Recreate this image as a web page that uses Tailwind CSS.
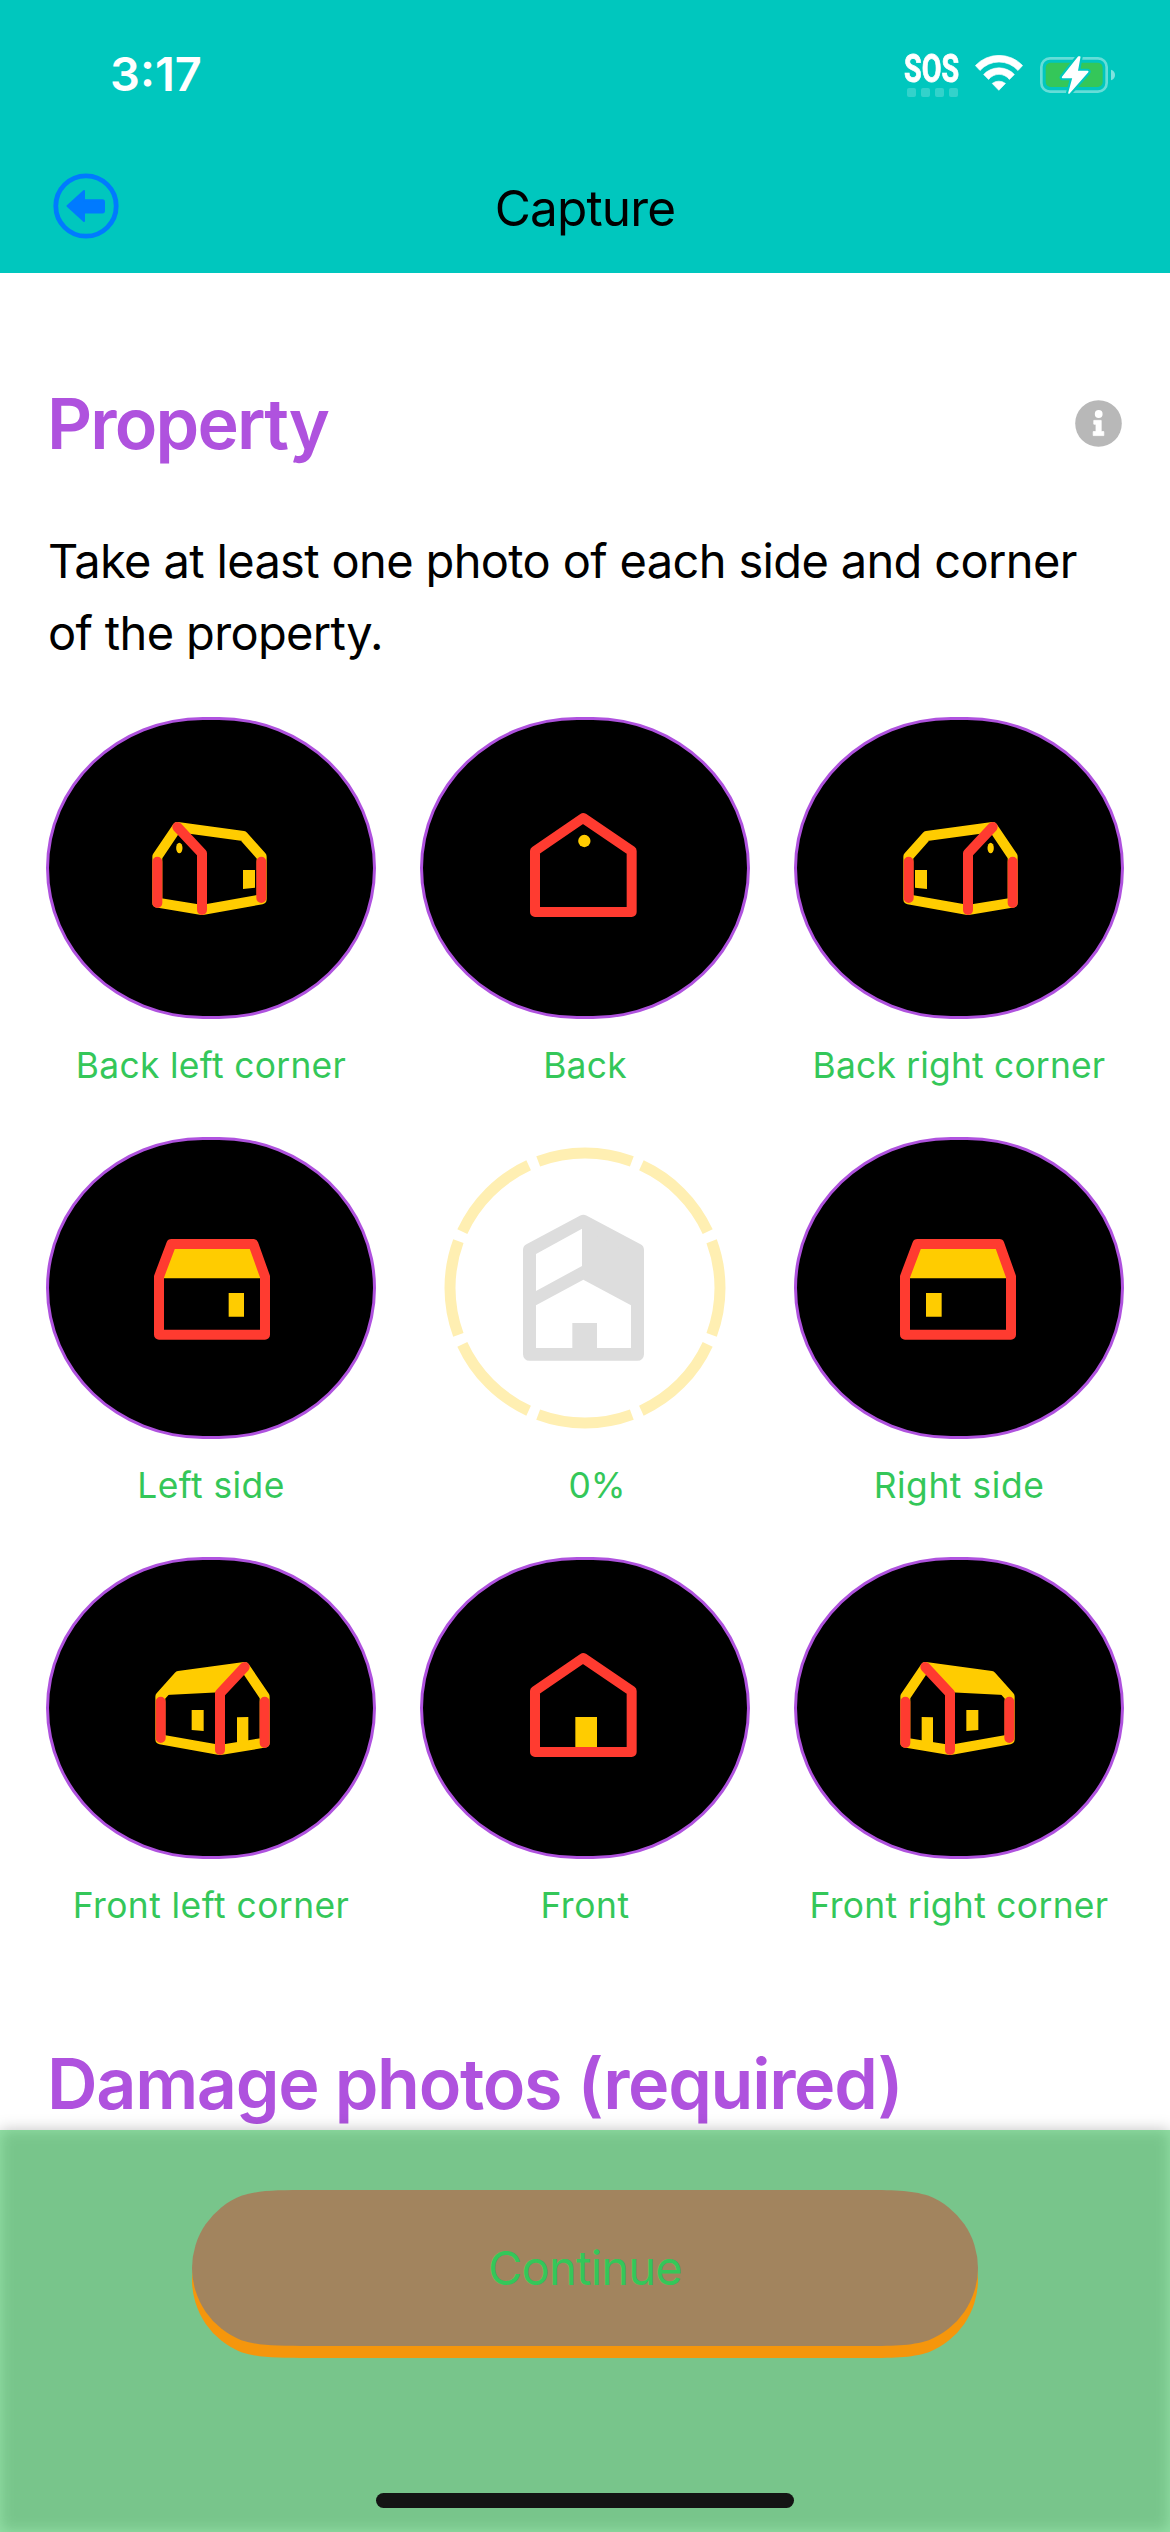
<!DOCTYPE html>
<html lang="en">
<head>
<meta charset="utf-8">
<title>Capture</title>
<script src="https://cdn.jsdelivr.net/npm/@tailwindcss/browser@4"></script>
</head>
<body class="bg-white">
<div class="relative flex h-[2532px] w-[1170px] flex-col overflow-hidden bg-white font-['Inter',sans-serif] text-black">

  <header class="h-[273px] shrink-0 bg-[#00c7be]">
    <!-- Status bar -->
    <div class="flex h-[173px] items-start justify-between pl-[110px] pr-[55px] pt-[50px] text-white">
      <span class="text-[47px] leading-[48px] font-semibold">3:17</span>
      <div class="flex items-start">
        <div class="mt-px mr-[15px] w-[56px]">
          <div class="w-[73px] origin-left scale-x-[0.754] font-['Roboto',sans-serif] text-[38px] leading-[37px] font-bold [-webkit-text-stroke:0.8px_white]">SOS</div>
          <div class="flex gap-[5px] pl-[3px]">
            <i class="size-[9px] rounded-[2px] bg-white/20"></i><i class="size-[9px] rounded-[2px] bg-white/20"></i><i class="size-[9px] rounded-[2px] bg-white/20"></i><i class="size-[9px] rounded-[2px] bg-white/20"></i>
          </div>
        </div>
        <svg class="mt-[5px] mr-[17px] h-[36px] w-[48px]" viewBox="345 75 145 109" fill="#fff" stroke="#fff" stroke-width="2" stroke-linejoin="round">
          <path d="M346 107A98 98 0 0 1 489 107L475 122A77 77 0 0 0 360 122Z"/>
          <path d="M371 134A64 64 0 0 1 464 134L449 149A40 40 0 0 0 386 149Z"/>
          <path d="M397 161A33 33 0 0 1 437 161L417 182Z"/>
        </svg>
        <svg class="mt-[6px] h-[38px] w-[75px]" viewBox="540 75 225 114">
          <rect x="544" y="82" width="196" height="100" rx="26" fill="none" stroke="#fff" stroke-opacity=".4" stroke-width="8"/>
          <path d="M753 116Q765 120 765 132T753 148Z" fill="#fff" fill-opacity=".5"/>
          <rect x="557" y="95" width="171" height="73" rx="15" fill="#34c759"/>
          <path d="M656 78L608 139H640L627 186L683 122H651L659 78Z" fill="#fff" stroke="#00c7be" stroke-width="18" stroke-linejoin="round"/>
          <path d="M656 78L608 139H640L627 186L683 122H651L659 78Z" fill="#fff" stroke="#fff" stroke-width="5" stroke-linejoin="round"/>
        </svg>
      </div>
    </div>
    <!-- Navigation bar -->
    <div class="grid grid-cols-[66px_1fr_66px] items-start px-[53px]">
      <svg class="size-[66px]" viewBox="0 0 66 66">
        <circle cx="33" cy="33" r="30.2" fill="none" stroke="#007aff" stroke-width="4.8"/>
        <path d="M14.5 33L31 18V27.2H49.5Q51 27.2 51 29V37.8Q51 39.5 49.5 39.5H31V48Z" fill="#007aff" stroke="#007aff" stroke-width="2" stroke-linejoin="round"/>
      </svg>
      <h1 class="text-center text-[49.5px] leading-[70px] tracking-[-0.82px]">Capture</h1>
    </div>
  </header>

  <main class="flex flex-col">
    <div class="mt-[109px] flex items-center justify-between pl-[47px] pr-[48px]">
      <h2 class="text-[70px] leading-[84px] font-semibold tracking-[-1.8px] text-[#af52de]">Property</h2>
      <svg class="mb-[2px] size-[47px]" viewBox="0 0 47 47">
        <circle cx="23.5" cy="23.5" r="23.3" fill="#b8b8b8"/>
        <circle cx="23.7" cy="14" r="3.9" fill="#fff"/>
        <path d="M18.800 20.400H26.200V31.600H28.800V35.600H18.200V31.600H21V24.200H18.800Z" fill="#fff" stroke="#fff" stroke-width=".8" stroke-linejoin="round"/>
      </svg>
    </div>
    <p class="mt-[59px] pl-[48px] text-[47px] leading-[72px] tracking-[-0.65px]">Take at least one photo of each side and corner<br>of the property.</p>

    <div class="mt-[48px] grid grid-cols-[repeat(3,330px)] gap-x-[44px] gap-y-[47px] px-[46px] text-center text-[35.4px] leading-[48px] text-[#34c759]">

      <div class="flex flex-col gap-[23px]">
        <div class="h-[302px] overflow-hidden rounded-[157px/151px] border-3 border-[#af52de] bg-black">
          <svg class="size-full" viewBox="57 60 972 888" stroke-width="30" stroke-linejoin="round" stroke-linecap="round" fill="none">
            <path d="M382 470L442 381L640 408L695 470V598L516 630L382 608Z" stroke="#fc0"/>
            <ellipse cx="448" cy="444" rx="9.5" ry="16" fill="#fc0"/>
            <path d="M639 510H675V563L639 567Z" fill="#fc0"/>
            <path d="M382 485V609M442 381L516 460V630M694 485V594" stroke="#ff3b30"/>
          </svg>
        </div>
        <span class="tracking-[0.31px]">Back left corner</span>
      </div>

      <div class="flex flex-col gap-[23px]">
        <div class="h-[302px] overflow-hidden rounded-[157px/151px] border-3 border-[#af52de] bg-black">
          <svg class="size-full" viewBox="39 60 972 888" fill="none">
            <path d="M375 453L519.5 354L665 453V636H375Z" stroke="#ff3b30" stroke-width="30" stroke-linejoin="round"/>
            <circle cx="523" cy="423" r="18.5" fill="#fc0"/>
          </svg>
        </div>
        <span class="tracking-[0.25px]">Back</span>
      </div>

      <div class="flex flex-col gap-[23px]">
        <div class="h-[302px] overflow-hidden rounded-[157px/151px] border-3 border-[#af52de] bg-black">
          <svg class="size-full" viewBox="51 60 972 888" stroke-width="30" stroke-linejoin="round" stroke-linecap="round" fill="none">
            <g transform="translate(1080) scale(-1 1)">
              <path d="M382 470L442 381L640 408L695 470V598L516 630L382 608Z" stroke="#fc0"/>
              <ellipse cx="448" cy="444" rx="9.5" ry="16" fill="#fc0"/>
              <path d="M639 510H675V563L639 567Z" fill="#fc0"/>
              <path d="M382 485V609M442 381L516 460V630M694 485V594" stroke="#ff3b30"/>
            </g>
          </svg>
        </div>
        <span class="tracking-[0.2px]">Back right corner</span>
      </div>

      <div class="flex flex-col gap-[23px]">
        <div class="h-[302px] overflow-hidden rounded-[157px/151px] border-3 border-[#af52de] bg-black">
          <svg class="size-full" viewBox="57 60 972 888" fill="none">
            <path d="M424 372H670L705 475H387Z" fill="#fc0"/>
            <path d="M596 519H642V590H596Z" fill="#fc0"/>
            <path d="M387 470L424 372H670L705 470V644H387Z" stroke="#ff3b30" stroke-width="30" stroke-linejoin="round"/>
          </svg>
        </div>
        <span class="tracking-[0.44px]">Left side</span>
      </div>

      <div class="flex flex-col gap-[23px]">
        <svg class="h-[302px] w-full" viewBox="30 51 990 906" fill="none">
          <circle cx="525" cy="504" r="405" stroke="#ffefb2" stroke-width="33" pathLength="360" stroke-dasharray="40.6 4.4" stroke-dashoffset="20.3"/>
          <path d="M358.5 390L520 304L682.5 390V703H358.5Z" fill="#ddd" stroke="#ddd" stroke-width="39" stroke-linejoin="round"/>
          <path d="M378 402L516 326V438L378 513ZM378 556L520 479L663 556V684H561V609H487V684H378Z" fill="#fff"/>
        </svg>
        <span class="pl-6">0%</span>
      </div>

      <div class="flex flex-col gap-[23px]">
        <div class="h-[302px] overflow-hidden rounded-[157px/151px] border-3 border-[#af52de] bg-black">
          <svg class="size-full" viewBox="51 60 972 888" fill="none">
            <path d="M412 372H658L693 475H375Z" fill="#fc0"/>
            <path d="M438 519H485V590H438Z" fill="#fc0"/>
            <path d="M375 470L412 372H658L693 470V644H375Z" stroke="#ff3b30" stroke-width="30" stroke-linejoin="round"/>
          </svg>
        </div>
        <span class="tracking-[0.56px]">Right side</span>
      </div>

      <div class="flex flex-col gap-[23px]">
        <div class="h-[302px] overflow-hidden rounded-[157px/151px] border-3 border-[#af52de] bg-black">
          <svg class="size-full" viewBox="57 60 972 888" stroke-width="30" stroke-linejoin="round" stroke-linecap="round" fill="none">
            <g transform="translate(1080) scale(-1 1)">
              <path d="M376 470L436 381L634 408L689 470V598L510 630L376 608Z" stroke="#fc0"/>
              <path d="M436 381L634 408L672 465L510 457Z" fill="#fc0"/>
              <path d="M425 531L459 532V612L425 608ZM559 510H595V570L559 573Z" fill="#fc0"/>
              <path d="M376 485V609M436 381L510 460V630M688 485V594" stroke="#ff3b30"/>
            </g>
          </svg>
        </div>
        <span class="tracking-[0.45px]">Front left corner</span>
      </div>

      <div class="flex flex-col gap-[23px]">
        <div class="h-[302px] overflow-hidden rounded-[157px/151px] border-3 border-[#af52de] bg-black">
          <svg class="size-full" viewBox="39 60 972 888" fill="none">
            <path d="M496 531H561V625H496Z" fill="#fc0"/>
            <path d="M375 453L519.5 354L665 453V636H375Z" stroke="#ff3b30" stroke-width="30" stroke-linejoin="round"/>
          </svg>
        </div>
        <span class="tracking-[0.57px]">Front</span>
      </div>

      <div class="flex flex-col gap-[23px]">
        <div class="h-[302px] overflow-hidden rounded-[157px/151px] border-3 border-[#af52de] bg-black">
          <svg class="size-full" viewBox="51 60 972 888" stroke-width="30" stroke-linejoin="round" stroke-linecap="round" fill="none">
            <path d="M376 470L436 381L634 408L689 470V598L510 630L376 608Z" stroke="#fc0"/>
            <path d="M436 381L634 408L672 465L510 457Z" fill="#fc0"/>
            <path d="M425 531L459 532V612L425 608ZM559 510H595V570L559 573Z" fill="#fc0"/>
            <path d="M376 485V609M436 381L510 460V630M688 485V594" stroke="#ff3b30"/>
          </svg>
        </div>
        <span class="tracking-[0.33px]">Front right corner</span>
      </div>
    </div>

    <h2 class="mt-[112px] pl-[47px] text-[70px] leading-[84px] font-semibold tracking-[-1.3px] whitespace-nowrap text-[#af52de]">Damage photos (required)</h2>
  </main>

  <!-- Translucent action bar floating over the scrolled content -->
  <footer class="absolute inset-x-0 bottom-0 h-[402px]">
    <div class="absolute inset-0 bg-black/24 blur-[7.5px]"></div>
    <div class="absolute inset-0 bg-[#34c759]/52"></div>
    <div class="relative flex h-full flex-col items-center justify-between pt-[60px] pb-[24px]">
      <button class="relative h-[156px] w-[786px] text-[47px] leading-[60px] tracking-[-0.76px] text-[#34c759]">
        <svg class="absolute top-0 left-0 h-[168px] w-[786px]" viewBox="0 0 786 168">
          <defs><path id="pill" d="M119 0C84.900 0 67.700 0 49.300 5.800A78 78 0 0 0 0 78A78 78 0 0 0 49.300 150.200C67.700 156 84.900 156 119 156H667C701.100 156 718.300 156 736.700 150.200A78 78 0 0 0 786 78A78 78 0 0 0 736.700 5.800C718.300 0 701.100 0 667 0Z"/></defs>
          <use href="#pill" y="12" fill="#f5960c"/>
          <use href="#pill" fill="#a2845e"/>
        </svg>
        <span class="relative">Continue</span>
      </button>
      <div class="h-[15px] w-[418px] rounded-full bg-[#141414]"></div>
    </div>
  </footer>
</div>
</body>
</html>
